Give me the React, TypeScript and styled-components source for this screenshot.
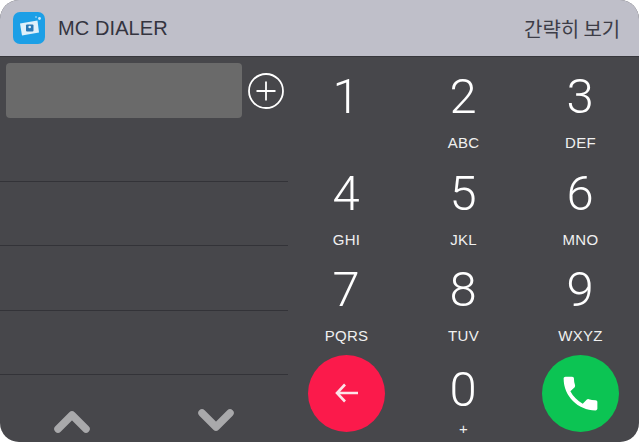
import React from "react";
import styled, { createGlobalStyle } from "styled-components";

const Global = createGlobalStyle`
  html, body { margin: 0; padding: 0; background: #fff; }
  #root { width: 639px; height: 442px; }
`;

const Widget = styled.div`
  width: 639px;
  height: 442px;
  display: flex;
  flex-direction: column;
  border-radius: 19px;
  overflow: hidden;
  font-family: "Liberation Sans", Arial, "Noto Sans CJK KR", sans-serif;
  background: #47474b;
`;

const Header = styled.header`
  height: 56px;
  flex: none;
  display: flex;
  align-items: center;
  padding: 0 19px 0 13px;
  background: #bfbfc9;
  border-bottom: 1px solid #37373c;
  box-sizing: content-box;
`;

const AppIcon = styled.svg`
  width: 32px;
  height: 32px;
  flex: none;
`;

const AppName = styled.span`
  margin-left: 13px;
  font-size: 20px;
  color: #34343f;
  flex: 1;
  letter-spacing: 0.1px;
`;

const More = styled.span`
  font-size: 20px;
  color: #3d3d47;
  font-family: "Noto Sans CJK KR", sans-serif;
  font-weight: 400;
  letter-spacing: -0.1px;
`;

const Body = styled.main`
  flex: 1;
  min-height: 0;
  display: flex;
`;

const Side = styled.section`
  width: 288px;
  flex: none;
  display: flex;
  flex-direction: column;
`;

const InputRow = styled.div`
  height: 125px;
  flex: none;
  box-sizing: border-box;
  padding: 6px 0 0 6px;
  display: flex;
  align-items: flex-start;
  border-bottom: 1px solid #333338;
`;

const InputBox = styled.div`
  width: 236px;
  height: 55px;
  border-radius: 4px;
  background: #6a6a6a;
`;

const AddButton = styled.svg`
  width: 36px;
  height: 36px;
  margin: 10px 0 0 6px;
`;

const EmptyRow = styled.div`
  height: 64.4px;
  flex: none;
  box-sizing: border-box;
  border-bottom: 1px solid #333338;
`;

const Arrows = styled.div`
  flex: 1;
  display: grid;
  grid-template-columns: 1fr 1fr;
  align-items: end;
`;

const ArrowIcon = styled.svg`
  width: 38px;
  height: 26px;
  justify-self: center;
  margin-bottom: 8px;
`;

const Pad = styled.section`
  flex: 1;
  display: grid;
  grid-template-columns: repeat(3, 1fr);
  grid-auto-rows: 96.5px;
`;

const Key = styled.div`
  display: flex;
  flex-direction: column;
  align-items: center;
  color: #fff;
`;

const Digit = styled.span<{ $top?: number }>`
  font-size: 49px;
  font-weight: 300;
  line-height: 54px;
  margin-top: ${(p) => p.$top ?? 13}px;
  margin-left: -1px;
  font-family: Roboto, "Liberation Sans", sans-serif;
`;

const Letters = styled.span<{ $top?: number }>`
  font-size: 15px;
  line-height: 17px;
  margin-top: ${(p) => p.$top ?? 10}px;
  color: #f0f0f0;
  letter-spacing: 0.3px;
`;

const RoundCell = styled.div`
  display: flex;
  justify-content: center;
  align-items: flex-start;
  padding-top: 8px;
`;

const Round = styled.div<{ $color: string }>`
  width: 77px;
  height: 77px;
  border-radius: 50%;
  background: ${(p) => p.$color};
  display: flex;
  align-items: center;
  justify-content: center;
`;

const keys: [string, string][] = [
  ["1", ""],
  ["2", "ABC"],
  ["3", "DEF"],
  ["4", "GHI"],
  ["5", "JKL"],
  ["6", "MNO"],
  ["7", "PQRS"],
  ["8", "TUV"],
  ["9", "WXYZ"],
];

export default function App() {
  return (
    <>
      <Global />
      <Widget>
        <Header>
          <AppIcon viewBox="0 0 32 32">
            <rect width="32" height="32" rx="7" fill="#1c9fe6" />
            <path d="M7 11.500 L24.500 8.500 L26 20.500 L9 23.500 Z" fill="#dff0fa" />
            <rect x="13" y="12.500" width="7.500" height="7" rx="1" fill="#2a78b5" />
            <circle cx="16.700" cy="15" r="1.300" fill="#dff0fa" />
            <circle cx="26.500" cy="6.500" r="1.400" fill="#cfeafa" />
            <circle cx="23" cy="5" r="0.800" fill="#cfeafa" />
          </AppIcon>
          <AppName>MC DIALER</AppName>
          <More>간략히 보기</More>
        </Header>
        <Body>
          <Side>
            <InputRow>
              <InputBox />
              <AddButton viewBox="0 0 36 36" fill="none" stroke="#fff">
                <circle cx="18" cy="18" r="17" strokeWidth="1.800" />
                <path d="M18 8.500V27.500M8.500 18H27.500" strokeWidth="1.800" />
              </AddButton>
            </InputRow>
            <EmptyRow />
            <EmptyRow />
            <EmptyRow />
            <Arrows>
              <ArrowIcon viewBox="0 0 38 26" fill="none" stroke="#a9a9ab" strokeWidth="7.500" strokeLinecap="round" strokeLinejoin="round">
                <path d="M5 21L19 7L33 21" />
              </ArrowIcon>
              <ArrowIcon viewBox="0 0 38 26" fill="none" stroke="#a9a9ab" strokeWidth="7.500" strokeLinecap="round" strokeLinejoin="round">
                <path d="M5 5L19 19L33 5" />
              </ArrowIcon>
            </Arrows>
          </Side>
          <Pad>
            {keys.map(([d, l]) => (
              <Key key={d}>
                <Digit>{d}</Digit>
                <Letters>{l}</Letters>
              </Key>
            ))}
            <RoundCell>
              <Round $color="#fb1a4b">
                <svg width="26" height="22" viewBox="0 0 26 22" fill="none" stroke="#fde3e8" strokeWidth="2.600">
                  <path d="M24 11H3M11 2.500L3 11L11 19.500" />
                </svg>
              </Round>
            </RoundCell>
            <Key>
              <Digit $top={16}>0</Digit>
              <Letters $top={3}>+</Letters>
            </Key>
            <RoundCell>
              <Round $color="#0cc453">
                <svg width="45" height="45" viewBox="0 0 24 24" fill="#fff">
                  <path d="M6.600 10.800c1.400 2.800 3.800 5.100 6.600 6.600l2.200-2.200c.3-.3.7-.4 1-.2 1.100.4 2.300.6 3.600.6.600 0 1 .4 1 1V20c0 .6-.4 1-1 1C10.600 21 3 13.400 3 4c0-.6.4-1 1-1h3.500c.6 0 1 .4 1 1 0 1.300.2 2.500.6 3.600.1.300 0 .7-.2 1l-2.300 2.200z" />
                </svg>
              </Round>
            </RoundCell>
          </Pad>
        </Body>
      </Widget>
    </>
  );
}
